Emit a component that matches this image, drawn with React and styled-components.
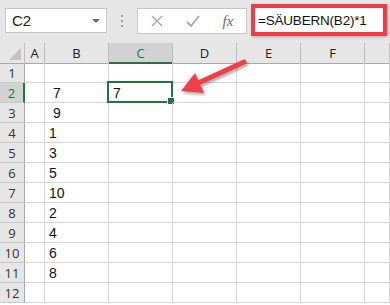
import React from "react";
import styled, { createGlobalStyle } from "styled-components";

const Global = createGlobalStyle`
  html, body { margin: 0; padding: 0; background: #ffffff; overflow: hidden; }
  * { box-sizing: border-box; }
`;

const Page = styled.div`
  position: relative;
  width: 390px;
  height: 305px;
  overflow: hidden;
  font-family: "Liberation Sans", Arial, sans-serif;
`;

const TopBar = styled.div`
  height: 43px;
  background: #e6e6e6;
  display: flex;
  align-items: flex-start;
  padding: 8px 0 0 5px;
`;

const NameBox = styled.div`
  width: 102px;
  height: 25px;
  background: #fff;
  border: 1px solid #c6c6c6;
  display: flex;
  align-items: center;
  justify-content: space-between;
  padding: 0 6px 0 6px;
  font-size: 15px;
  color: #222;
`;

const Caret = styled.span`
  width: 0;
  height: 0;
  border-left: 4px solid transparent;
  border-right: 4px solid transparent;
  border-top: 4px solid #6d6d6d;
`;

const Dots = styled.div`
  width: 30px;
  height: 25px;
  display: flex;
  flex-direction: column;
  align-items: center;
  justify-content: center;
  gap: 3px;
  span { width: 2px; height: 2px; background: #a0a0a0; }
`;

const IconBox = styled.div`
  width: 110px;
  height: 26px;
  background: #fff;
  border: 1px solid #c6c6c6;
  display: grid;
  grid-template-columns: 38px 34px 1fr;
  align-items: center;
  justify-items: center;
  color: #a6a6a6;
`;

const Fx = styled.span`
  font-family: "Liberation Serif", "Times New Roman", serif;
  font-style: italic;
  font-size: 15px;
  color: #6b6b6b;
`;

const FormulaBox = styled.div`
  margin-left: 4px;
  margin-top: -4px;
  width: 136px;
  height: 32px;
  border: 4px solid #ef3b45;
  background: #fff;
  display: flex;
  align-items: center;
  padding-left: 3px;
  font-size: 13.5px;
  letter-spacing: -0.2px;
  color: #111;
  box-shadow: 1px 1px 3px rgba(0,0,0,0.25);
`;

const Grid = styled.div`
  display: grid;
  grid-template-columns: 25px 20px 64px 64px 64px 64px 64px 1fr;
  grid-auto-rows: 20px;
`;

const ColHead = styled.div`
  height: 21px;
  background: ${(p) => (p.$sel ? "#d2d2d2" : "#e6e6e6")};
  border-right: 1px solid #bdbdbd;
  border-bottom: ${(p) => (p.$sel ? "2px solid #217346" : "1px solid #a8a8a8")};
  display: flex;
  align-items: center;
  justify-content: center;
  font-family: "Open Sans", "Liberation Sans", sans-serif;
  font-size: 13px;
  color: ${(p) => (p.$sel ? "#217346" : "#222")};
  position: relative;
`;

const Corner = styled(ColHead)`
  &::after {
    content: "";
    position: absolute;
    right: 3px;
    bottom: 3px;
    border-left: 12px solid transparent;
    border-bottom: 12px solid #c2c2c2;
  }
`;

const RowHead = styled.div`
  background: ${(p) => (p.$sel ? "#d2d2d2" : "#e6e6e6")};
  border-right: ${(p) => (p.$sel ? "2px solid #217346" : "1px solid #a8a8a8")};
  border-bottom: 1px solid #c8c8c8;
  display: flex;
  align-items: center;
  justify-content: center;
  font-family: "Open Sans", "Liberation Sans", sans-serif;
  font-size: 13px;
  color: ${(p) => (p.$sel ? "#217346" : "#333")};
`;

const Cell = styled.div`
  border-right: 1px solid #d4d4d4;
  border-bottom: 1px solid #d4d4d4;
  font-size: 14px;
  color: #111;
  display: flex;
  align-items: center;
  padding-left: ${(p) => p.$pad || 3}px;
  white-space: pre;
  position: relative;
`;

const Selection = styled.div`
  position: absolute;
  left: -2px;
  top: -2px;
  right: -1px;
  bottom: -1px;
  border: 2px solid #217346;
  pointer-events: none;
  &::after {
    content: "";
    position: absolute;
    right: -4px;
    bottom: -4px;
    width: 6px;
    height: 6px;
    background: #217346;
    border: 1px solid #fff;
  }
`;

const ArrowSvg = styled.svg`
  position: absolute;
  left: 0;
  top: 0;
  pointer-events: none;
`;

const cols = ["A", "B", "C", "D", "E", "F", ""];
const bValues = ["", " 7", " 9", "1", "3", "5", "10", "2", "4", "6", "8", ""];

export default function App() {
  return (
    <Page>
      <Global />
      <TopBar>
        <NameBox>
          <span>C2</span>
          <Caret />
        </NameBox>
        <Dots><span /><span /><span /></Dots>
        <IconBox>
          <svg width="12" height="12" viewBox="0 0 12 12">
            <path d="M1 1 L11 11 M11 1 L1 11" stroke="#a8a8a8" strokeWidth="1.4" fill="none" />
          </svg>
          <svg width="14" height="12" viewBox="0 0 14 12">
            <path d="M1 7 L5 11 L13 1" stroke="#a8a8a8" strokeWidth="1.8" fill="none" />
          </svg>
          <Fx>fx</Fx>
        </IconBox>
        <FormulaBox>=SÄUBERN(B2)*1</FormulaBox>
      </TopBar>
      <Grid>
        <Corner />
        {cols.map((c, i) => (
          <ColHead key={i} $sel={c === "C"}>{c}</ColHead>
        ))}
        {bValues.map((v, i) => (
          <React.Fragment key={i}>
            <RowHead $sel={i === 1}>{i + 1}</RowHead>
            <Cell />
            <Cell $pad={4}>{v}</Cell>
            <Cell $pad={4}>
              {i === 1 ? "7" : ""}
              {i === 1 && <Selection />}
            </Cell>
            <Cell />
            <Cell />
            <Cell />
            <Cell />
          </React.Fragment>
        ))}
      </Grid>
      <ArrowSvg width="390" height="305" viewBox="0 0 390 305">
        <defs>
          <filter id="sh" x="-20%" y="-20%" width="140%" height="140%">
            <feDropShadow dx="1.5" dy="2" stdDeviation="1.5" floodColor="#000" floodOpacity="0.35" />
          </filter>
        </defs>
        <g filter="url(#sh)" fill="#ef4149" stroke="#ef4149">
          <line x1="244" y1="62" x2="196" y2="84" strokeWidth="5" strokeLinecap="round" />
          <polygon points="181,91 195,73 204,93" stroke="none" />
        </g>
      </ArrowSvg>
    </Page>
  );
}
